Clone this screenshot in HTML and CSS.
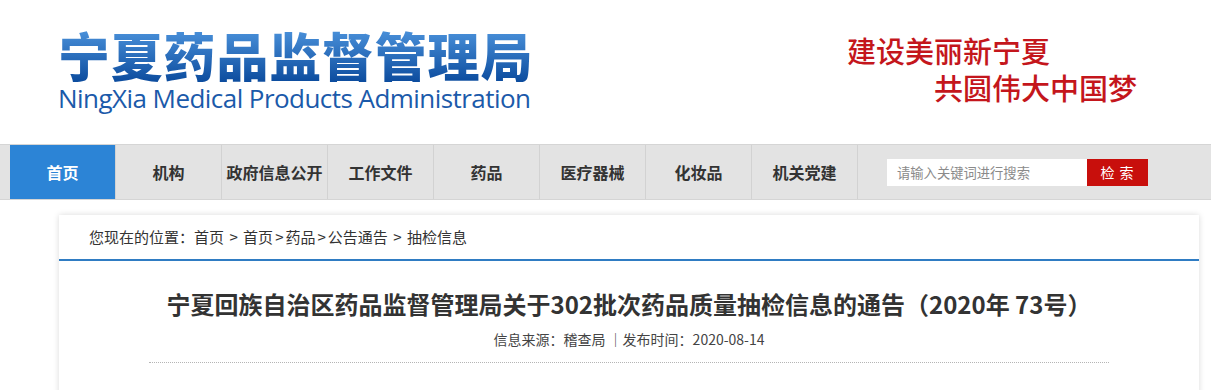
FILE: index.html
```html
<!DOCTYPE html>
<html lang="zh-CN">
<head>
  <meta charset="UTF-8">
  <title>宁夏药品监督管理局</title>
  <link rel="stylesheet" href="styles.css">
</head>
<body>
  <div class="header">
    <div class="logo">
      <div class="logo-cn">宁夏药品监督管理局</div>
      <div class="logo-en">NingXia Medical Products Administration</div>
    </div>
    <div class="slogan">
      <div class="slogan-1">建设美丽新宁夏</div>
      <div class="slogan-2">共圆伟大中国梦</div>
    </div>
  </div>

  <div class="nav">
    <ul class="nav-list">
      <li class="active"><a href="#">首页</a></li>
      <li><a href="#">机构</a></li>
      <li><a href="#">政府信息公开</a></li>
      <li><a href="#">工作文件</a></li>
      <li><a href="#">药品</a></li>
      <li><a href="#">医疗器械</a></li>
      <li><a href="#">化妆品</a></li>
      <li><a href="#">机关党建</a></li>
    </ul>
    <form class="search">
      <input type="text" placeholder="请输入关键词进行搜索">
      <button type="button">检 索</button>
    </form>
  </div>

  <div class="card">
    <div class="crumb">您现在的位置：<a href="#">首页</a> <span class="sep">&gt;</span> <a href="#">首页</a><span class="sep">&gt;</span><a href="#">药品</a><span class="sep">&gt;</span><a href="#">公告通告</a> <span class="sep">&gt;</span> <a href="#">抽检信息</a></div>
    <div class="article-head">
      <h1>宁夏回族自治区药品监督管理局关于302批次药品质量抽检信息的通告（2020年 73号）</h1>
      <div class="meta">信息来源：稽查局 ｜发布时间：2020-08-14</div>
    </div>
  </div>
</body>
</html>
```

FILE: styles.css
```css
body {
  margin: 0;
  background: #fff;
  font-family: "Noto Sans CJK SC", "Noto Sans", sans-serif;
  color: #333;
}
.header {
  height: 144px;
  display: flex;
}
.logo {
  padding: 28px 0 0 58px;
}
.logo-cn {
  font-size: 52px;
  font-weight: 900;
  line-height: 54px;
  letter-spacing: 0.8px;
  background: linear-gradient(#4c93dc, #0c4c9e);
  -webkit-background-clip: text;
  background-clip: text;
  color: transparent;
}
.logo-en {
  font-family: "Open Sans", sans-serif;
  font-size: 26px;
  line-height: 30px;
  color: #1b5aaa;
  letter-spacing: -0.55px;
  margin-top: 1px;
}
.slogan {
  margin-left: auto;
  margin-right: 74px;
  padding-top: 32px;
  color: #c4161c;
  font-size: 29px;
  font-weight: 500;
  line-height: 37px;
}
.slogan-2 {
  padding-left: 87px;
}

.nav {
  display: flex;
  align-items: center;
  background: #e3e3e3;
  border-top: 1px solid #d5d5d5;
  border-bottom: 1px solid #d5d5d5;
  padding-left: 10px;
  height: 54px;
}
.nav-list {
  display: flex;
  list-style: none;
  margin: 0;
  padding: 0;
  height: 100%;
}
.nav-list li {
  width: 105px;
  border-right: 1px solid #d2d2d2;
}
.nav-list li a {
  display: flex;
  align-items: center;
  justify-content: center;
  height: 100%;
  font-size: 16px;
  font-weight: 700;
  color: #333;
  text-decoration: none;
}
.nav-list li.active {
  background: #2c84d6;
}
.nav-list li.active a {
  color: #fff;
}
.search {
  display: flex;
  margin: 0 0 0 29px;
}
.search input {
  width: 200px;
  height: 27px;
  box-sizing: border-box;
  border: none;
  padding: 0 10px;
  font-family: inherit;
  font-size: 13.3px;
  color: #333;
  outline: none;
}
.search input::placeholder {
  color: #8a8a8a;
}
.search button {
  width: 61px;
  height: 27px;
  border: none;
  background: #c80f0c;
  color: #fff;
  font-family: inherit;
  font-size: 14px;
  letter-spacing: 1px;
  padding: 0;
}

.card {
  margin: 15px 0 0 59px;
  width: 1140px;
  height: 200px;
  background: #fff;
  box-shadow: 0 0 6px rgba(0, 0, 0, 0.15);
}
.crumb {
  height: 44px;
  line-height: 44px;
  padding-left: 30px;
  font-size: 15px;
  color: #333;
  border-bottom: 2px solid #2f7cc3;
}
.crumb a {
  color: #333;
  text-decoration: none;
}
.crumb .sep {
  margin: 0 2px;
}
.article-head {
  margin: 0 90px;
  padding: 25px 0 13px;
  border-bottom: 1px dotted #b5b5b5;
  text-align: center;
}
.article-head h1 {
  margin: 0;
  font-size: 24px;
  font-weight: 700;
  line-height: 36px;
  color: #333;
}
.meta {
  margin-top: 7px;
  font-size: 14px;
  line-height: 20px;
  color: #444;
}
```
